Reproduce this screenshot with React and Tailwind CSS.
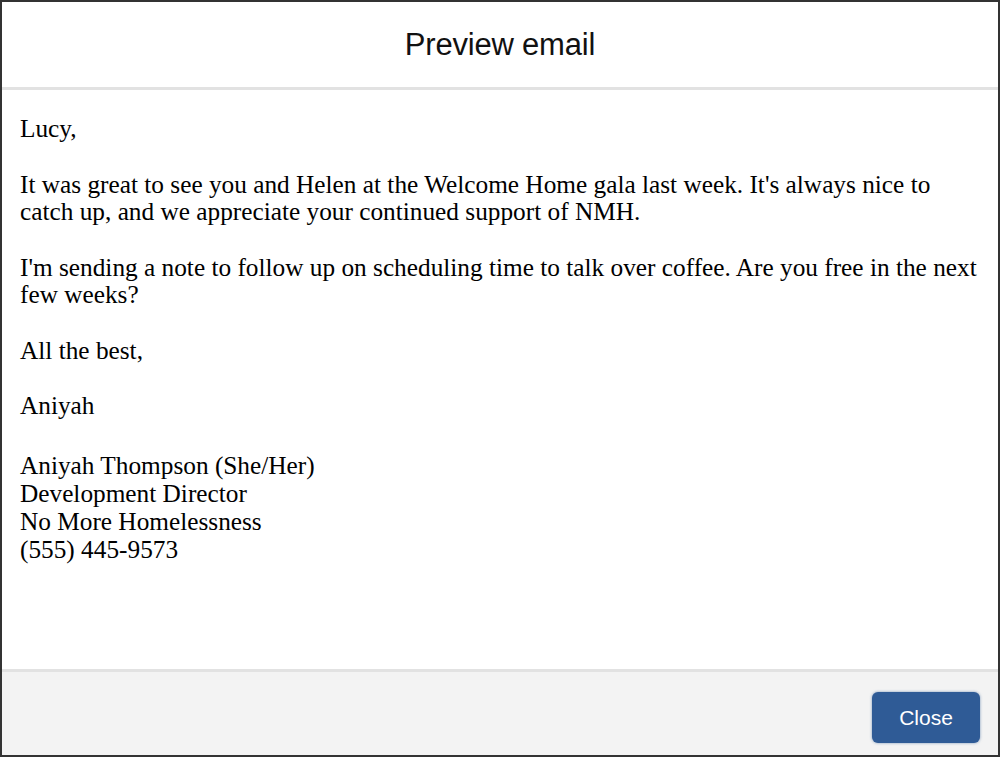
import React from "react";

const paragraphs = [
  "Lucy,",
  "It was great to see you and Helen at the Welcome Home gala last week. It's always nice to catch up, and we appreciate your continued support of NMH.",
  "I'm sending a note to follow up on scheduling time to talk over coffee. Are you free in the next few weeks?",
  "All the best,",
  "Aniyah",
];

const signature = [
  "Aniyah Thompson (She/Her)",
  "Development Director",
  "No More Homelessness",
  "(555) 445-9573",
];

export default function App() {
  return (
    <div className="w-[1000px] h-[757px] bg-white border-2 border-[#333] flex flex-col overflow-hidden">
      {/* Header */}
      <div className="h-[88px] shrink-0 flex items-center justify-center border-b-[3px] border-[#e2e2e2]">
        <h1 className="text-[31px] pt-[2px] text-[#111] font-['Helvetica','Liberation_Sans',sans-serif] tracking-[-0.2px]">
          Preview email
        </h1>
      </div>

      {/* Body */}
      <div className="flex-1 px-[18px] pt-[25px] font-['Liberation_Serif','Times_New_Roman',serif] text-[25.3px] leading-[27.5px] text-black">
        {paragraphs.map((p, i) => (
          <p key={i} className="mb-[28px]">
            {p}
          </p>
        ))}
        <div className="pt-[3px]">
          {signature.map((line, i) => (
            <div key={i} className="leading-[28.3px]">
              {line}
            </div>
          ))}
        </div>
      </div>

      {/* Footer */}
      <div className="h-[86px] shrink-0 bg-[#f3f3f3] border-t-[3px] border-[#e2e2e2] flex items-center justify-end pr-[18px]">
        <button
          type="button"
          className="w-[108px] h-[51px] mt-[8px] rounded-[6px] bg-[#2f5b96] text-white text-[21px] font-['Liberation_Sans',Arial,sans-serif] shadow-[0_0_3px_rgba(47,91,150,0.6)]"
        >
          Close
        </button>
      </div>
    </div>
  );
}
